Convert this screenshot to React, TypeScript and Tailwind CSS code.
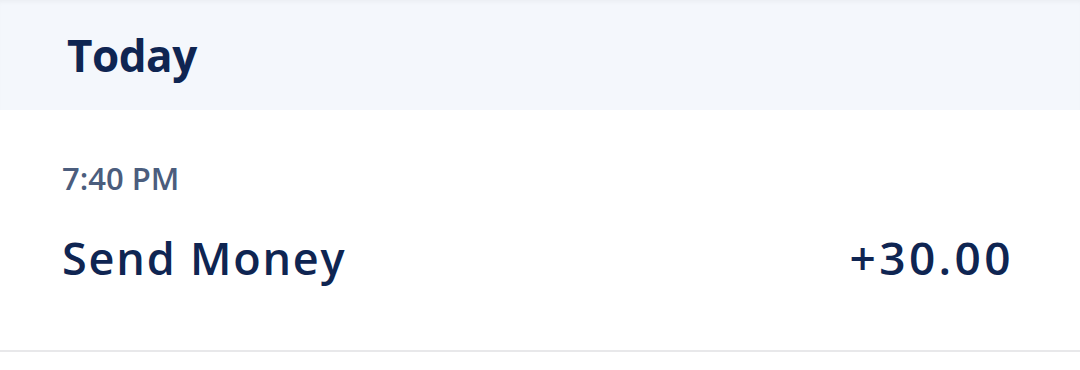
export default function App() {
  return (
    <div className="flex h-[370px] w-[1080px] flex-col bg-white font-['Open_Sans',sans-serif]">
      <div className="flex h-[110px] items-center bg-[#f4f7fc] px-[67px] shadow-[inset_0_4px_4px_-2px_rgba(0,0,0,0.04)]">
        <h2 className="text-[44px] font-bold leading-none tracking-[-0.5px] text-[#0f2552]">
          Today
        </h2>
      </div>

      <div className="flex flex-col border-b-2 border-[#e8e8ea] px-[62px] pb-[70px] pt-[53px]">
        <p className="text-[31px] font-semibold leading-none text-[#4b5d7d]">7:40 PM</p>
        <div className="mt-[40px] flex items-center justify-between pr-[4px]">
          <span className="text-[45px] font-semibold leading-none tracking-[1.8px] text-[#0f2552]">
            Send Money
          </span>
          <span className="text-[46px] font-semibold leading-none tracking-[3.4px] text-[#0f2552]">
            +30.00
          </span>
        </div>
      </div>
    </div>
  );
}
